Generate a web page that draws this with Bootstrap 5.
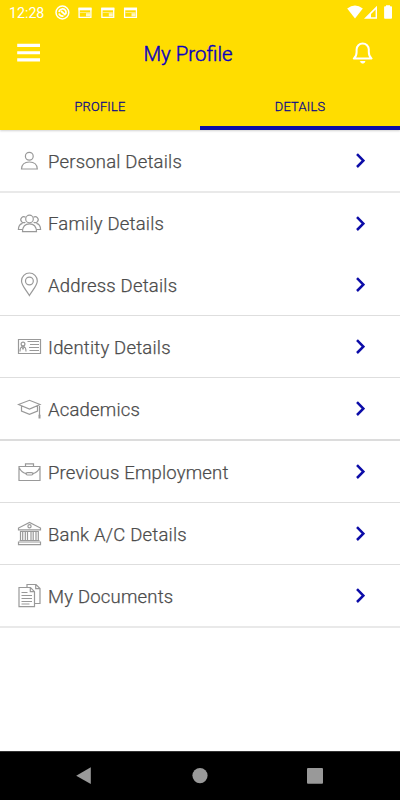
<!DOCTYPE html>
<html lang="en">
<head>
<meta charset="utf-8">
<meta name="viewport" content="width=device-width, initial-scale=1">
<title>My Profile</title>
<link href="https://cdn.jsdelivr.net/npm/bootstrap@5.3.0/dist/css/bootstrap.min.css" rel="stylesheet">
<style>
body{font-family:Roboto,"Liberation Sans",sans-serif;background:#fff;}
.screen{width:400px;height:800px;overflow:hidden;}
svg{display:block;flex:none;}
.app-head{background:#ffdd00;height:130px;box-shadow:0 1px 2px rgba(0,0,0,.18);z-index:1;}
.status{height:25px;padding:0 8px 0 9px;color:#fff;}
.clock{font-size:14.2px;line-height:25px;width:46px;padding-top:1px;}
.titlebar{height:57px;padding:0 26px 0 17px;}
.app-title{font-size:20.4px;line-height:24px;color:#0a00c0;font-weight:300;-webkit-text-stroke:.45px #0a00c0;margin-right:17px;}
.profile-tabs{height:48px;}
.profile-tabs a{font-size:12.8px;line-height:18px;color:#0c0a88;padding:16px 0 10px;text-decoration:none;text-align:center;letter-spacing:.25px;font-weight:300;-webkit-text-stroke:.3px #0c0a88;border-bottom:4px solid transparent;}
.profile-tabs a.active{border-bottom-color:#0d0da6;}
.entry{height:61px;box-sizing:content-box;padding:0 35px 0 17px;color:#4c4c4c;font-size:18.5px;font-weight:300;line-height:24px;text-decoration:none;letter-spacing:.2px;-webkit-text-stroke:.25px #4c4c4c;}
.entry span{padding:2px 0 0 6px;}
.entry.no-line span{padding-top:1px;}
.line1{border-bottom:1px solid #dedede;}
.line2{border-bottom:2px solid #e9e9e9;}
.line-strong{border-bottom:2px solid #dcdcdc;}
.ico{fill:none;stroke:#999;stroke-width:1.2;}
.chev{fill:none;stroke:#0c0ca8;stroke-width:2.5;}
.sysnav{height:49px;background:#000;border-top:1px solid #333;}
</style>
<script src="https://cdn.jsdelivr.net/npm/bootstrap@5.3.0/dist/js/bootstrap.bundle.min.js"></script>
</head>
<body>
<div class="screen d-flex flex-column">
<header class="app-head position-relative flex-shrink-0">
  <div class="status d-flex align-items-center">
    <div class="clock">12:28</div>
    <svg width="84" height="25" viewBox="55 0 84 25" fill="none" stroke="#fff">
      <circle cx="62.4" cy="12.5" r="6.4" stroke-width="1.5"/>
      <path d="M59 12a3.600 3.600 0 0 1 6.700-1.200q.6 1.500.1 3.200M59 13.500a3.800 3.800 0 0 0 4.500 2.400M61 11l4.500 4" stroke-width="1.700"/>
      <g id="cal"><path d="M79.100 8.500h11.800v8.900H79.100z" stroke-width="1.300"/><path d="M78.500 9h13" stroke-width="2.600"/><path d="M86 13.200h4v3.200h-4z" fill="#fff" stroke="none" opacity=".75"/><path d="M80 12.500h10" stroke-width=".8" opacity=".6"/></g>
      <use href="#cal" x="22.800"/><use href="#cal" x="45.500"/>
    </svg>
    <svg class="ms-auto" width="46" height="25" viewBox="346 0 46 25" fill="#fff">
      <path d="M347.200 8.400Q355 2.800 362.800 8.400L355 18.400z"/>
      <path fill-rule="evenodd" d="M364 18.700L377 5.700v13zM371 17.300h4.600V9.400L371 14z"/>
      <path d="M386 6.200v-.9h4v.9h1.100q.9 0 .9.900V18q0 .8-.9.800H385q-.9 0-.9-.8V7.100q0-.9.900-.9z"/>
    </svg>
  </div>
  <div class="titlebar d-flex align-items-center justify-content-between">
    <svg width="24" height="24" viewBox="0 0 24 24" fill="#fff"><path d="M.2 1.700h22.800v3.300H.2zM.2 9.300h22.800v3H.2zM.2 16.300h22.800v3.300H.2z"/></svg>
    <div class="app-title">My Profile</div>
    <svg width="22" height="26" viewBox="0 0 22 26" fill="none" stroke="#fff" stroke-width="2" stroke-linejoin="round"><path d="M1.800 17.500C4 16 4.600 14 4.600 11V8.500a6.100 6.100 0 0 1 12.200 0V11c0 3 .6 5 2.800 6.500z"/><path d="M8.400 20.600a2.500 2.500 0 0 0 4.600 0z" fill="#fff" stroke-width="1"/></svg>
  </div>
  <nav class="profile-tabs nav nav-fill flex-nowrap">
    <a class="w-50" href="#">PROFILE</a>
    <a class="w-50 active" href="#">DETAILS</a>
  </nav>
</header>

<main class="flex-grow-1">
  <a class="entry line2 d-flex align-items-center" href="#">
    <svg class="ico" width="25" height="25"><circle cx="12.300" cy="8.300" r="3.900"/><path d="M4.500 21C4.700 16 8 14 12.400 14s7.700 2 7.900 7z"/></svg>
    <span>Personal Details</span>
    <svg class="chev ms-auto" width="9" height="17"><path d="M1 2.200L7.300 8.600 1 15"/></svg>
  </a>
  <a class="entry no-line d-flex align-items-center" href="#">
    <svg class="ico" width="25" height="25"><circle cx="12.500" cy="8" r="3.800"/><path d="M5.500 20.600C5.700 15 8.300 12.900 12.500 12.900s6.800 2.100 7 7.700z"/><path d="M8.600 6.200a3 3 0 1 0-.2 5M16.400 6.200a3 3 0 1 1 .2 5M5.500 12.300C2.700 13 1.500 15 1.400 18.500h4.400M19.500 12.300c2.800.7 4 2.700 4.100 6.200h-4.400"/></svg>
    <span>Family Details</span>
    <svg class="chev ms-auto" width="9" height="17"><path d="M1 2.200L7.300 8.600 1 15"/></svg>
  </a>
  <a class="entry line1 d-flex align-items-center" href="#">
    <svg class="ico" width="25" height="25"><path d="M12.400 23.500C10 19 4.500 13.500 4.500 8.900a7.900 7.900 0 0 1 15.800 0c0 4.600-5.500 10.100-7.900 14.600z"/><circle cx="12.400" cy="9" r="3.900"/></svg>
    <span>Address Details</span>
    <svg class="chev ms-auto" width="9" height="17"><path d="M1 2.200L7.300 8.600 1 15"/></svg>
  </a>
  <a class="entry line1 d-flex align-items-center" href="#">
    <svg class="ico" width="25" height="25"><path d="M1.500 5.500h22v14h-22z"/><circle cx="6" cy="10" r="1.900"/><path d="M3 17.500c0-3 1-5 3-5s3 2 3 5M5 13l1 2 1-2M10.500 7.500h11.500M13 10.500h9M12 13.500h10M12.500 16.500h9.500"/></svg>
    <span>Identity Details</span>
    <svg class="chev ms-auto" width="9" height="17"><path d="M1 2.200L7.300 8.600 1 15"/></svg>
  </a>
  <a class="entry line-strong d-flex align-items-center" href="#">
    <svg class="ico" width="25" height="25"><path d="M1.500 8.500L12.500 4.300l10.500 4.200-10.500 4.500zM4.500 10v5l8 3.300 8-3.300v-5M22.500 8.700v11"/><path d="M22.500 18.700v3.800" stroke-width="2"/></svg>
    <span>Academics</span>
    <svg class="chev ms-auto" width="9" height="17"><path d="M1 2.200L7.300 8.600 1 15"/></svg>
  </a>
  <a class="entry line1 d-flex align-items-center" href="#">
    <svg class="ico" width="25" height="25"><path d="M2 7.500h21v14H2zM8.500 7.500v-2.700h8v2.700M2 8.500c2 4 4.500 5.700 7.500 6.200M15.500 14.700c3-.5 5.500-2.200 7.500-6.200"/><path d="M10.500 13.600h4q1.500 0 1.500 1.200t-1.500 1.200h-4Q9 16 9 14.800t1.500-1.200z"/></svg>
    <span>Previous Employment</span>
    <svg class="chev ms-auto" width="9" height="17"><path d="M1 2.200L7.300 8.600 1 15"/></svg>
  </a>
  <a class="entry line1 d-flex align-items-center" href="#">
    <svg class="ico" width="25" height="25"><path d="M1.500 8.800V7L12.500 1.500 23.500 7v1.800zM1.500 8.800h22M4 10.500h17"/><circle cx="12.500" cy="5.300" r="1.600"/><path d="M3.500 10v9.500M5.700 10v9.500M8.300 10v9.500M10.500 10v9.500M14 10v9.500M16.200 10v9.500M19 10v9.500M21.300 10v9.500M2.500 19.500h20M1.500 21h22v2.700h-22z"/></svg>
    <span>Bank A/C Details</span>
    <svg class="chev ms-auto" width="9" height="17"><path d="M1 2.200L7.300 8.600 1 15"/></svg>
  </a>
  <a class="entry line2 d-flex align-items-center" href="#">
    <svg class="ico" width="25" height="25"><path d="M2 4.500h11.500l4 4.200v15H2zM13.300 4.500v4.200h4.200M10 4.500v-3h9l4 4v15h-5.500M18.700 1.500v4.200H23M4.500 9.500h6M4.500 12.500h10.500M4.500 15.500H15M4.500 18.500H15M4.500 21h8"/></svg>
    <span>My Documents</span>
    <svg class="chev ms-auto" width="9" height="17"><path d="M1 2.200L7.300 8.600 1 15"/></svg>
  </a>
</main>

<footer class="sysnav flex-shrink-0">
  <svg width="400" height="48" viewBox="0 752 400 48" fill="#999"><path d="M76.200 775.700L90.800 767.300v16.600z"/><circle cx="200" cy="775.600" r="7.600"/><rect x="307" y="768" width="16" height="15.800" rx="1"/></svg>
</footer>
</div>
</body>
</html>
